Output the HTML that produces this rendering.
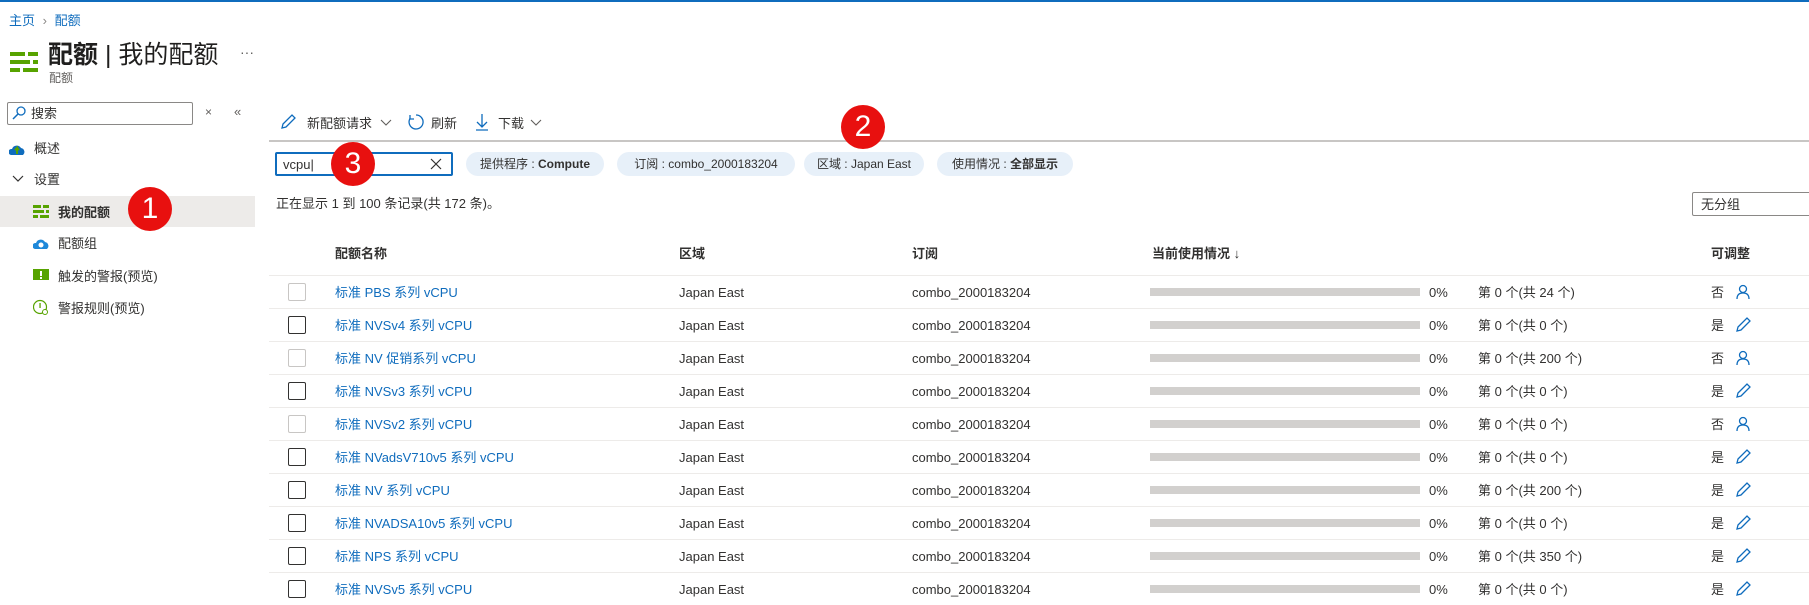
<!DOCTYPE html>
<html><head><meta charset="utf-8"><style>
*{margin:0;padding:0;box-sizing:border-box}
body{width:1809px;height:585px;overflow:hidden;background:#fff;font-family:"Liberation Sans","Noto Sans CJK SC",sans-serif;color:#323130;font-size:13px;line-height:17px;position:relative}
.a{position:absolute;white-space:nowrap}
.lnk{color:#0f6cbd}
.badge{position:absolute;width:44px;height:44px;border-radius:50%;background:#e8100f;color:#fff;font-size:30px;text-align:center;line-height:44px}
.pill{position:absolute;top:152px;height:24px;border-radius:12px;background:#e7f0f9;line-height:24px;text-align:center;font-size:12px;color:#323130;white-space:nowrap}
.row{position:absolute;left:269px;width:1540px;height:33px;border-top:1px solid #edebe9}
.cb{position:absolute;left:19px;top:7px;width:18px;height:18px;border:1px solid #323130;border-radius:2px}
.cb.d{border-color:#c8c6c4}
.bar{position:absolute;left:881px;top:12px;width:270px;height:8px;background:#d2d0ce}
</style></head><body>
<div class="a" style="left:0;top:0;width:1809px;height:2px;background:#0f6cbd"></div>
<div class="a lnk" style="left:9px;top:12px;font-size:13px">主页 <span style="color:#8a8886;margin:0 4px">›</span> 配额</div>
<svg class="a" style="left:10px;top:52px" width="28" height="22"><g fill="#57a300"><rect x="0" y="0" width="15" height="4"/><rect x="18" y="0" width="10" height="4"/><rect x="0" y="8" width="20" height="4"/><rect x="23" y="8" width="5" height="4"/><rect x="0" y="16" width="10" height="4"/><rect x="13" y="16" width="15" height="4"/></g></svg>
<div class="a" style="left:48px;top:40px;font-size:25px;line-height:30px;color:#201f1e"><b>配额</b> | 我的配额</div>
<div class="a" style="left:240px;top:44px;font-size:14px;color:#605e5c">···</div>
<div class="a" style="left:49px;top:71px;font-size:12px;line-height:14px;color:#605e5c">配额</div>
<div class="a" style="left:7px;top:102px;width:186px;height:23px;border:1px solid #8a8886;border-radius:2px"></div>
<svg class="a" style="left:12px;top:106px" width="14" height="14"><circle cx="9" cy="5" r="4" fill="none" stroke="#0f6cbd" stroke-width="1.3"/><path d="M6 8l-5 5" stroke="#0f6cbd" stroke-width="1.5"/></svg>
<div class="a" style="left:31px;top:105px;font-size:13px">搜索</div>
<div class="a" style="left:205px;top:104px;font-size:12px;color:#605e5c">×</div>
<div class="a" style="left:234px;top:103px;font-size:13px;color:#605e5c">«</div>
<svg class="a" style="left:9px;top:142px" width="16" height="14"><path d="M2 13h12a4 4 0 0 0-2-7 5 5 0 0 0-9 1 3 3 0 0 0-1 6z" fill="#0f6cbd"/><path d="M8 12V6l-2 2M8 6l2 2" stroke="#57a300" stroke-width="2" fill="none"/></svg>
<div class="a" style="left:34px;top:140px">概述</div>
<svg class="a" style="left:12px;top:175px" width="12" height="8"><path d="M1 1l5 5 5-5" fill="none" stroke="#323130" stroke-width="1.2"/></svg>
<div class="a" style="left:34px;top:171px">设置</div>
<div class="a" style="left:0;top:196px;width:255px;height:31px;background:#edebe9"></div>
<svg class="a" style="left:33px;top:205px" width="16" height="13"><g fill="#57a300"><rect x="0" y="0" width="8" height="3"/><rect x="10" y="0" width="6" height="3"/><rect x="0" y="5" width="11" height="3"/><rect x="13" y="5" width="3" height="3"/><rect x="0" y="10" width="5" height="3"/><rect x="7" y="10" width="9" height="3"/></g></svg>
<div class="a" style="left:58px;top:204px;font-weight:bold">我的配额</div>
<svg class="a" style="left:33px;top:236px" width="17" height="14"><path d="M2 13h12a4 4 0 0 0-2-7 5 5 0 0 0-9 1 3 3 0 0 0-1 6z" fill="#1e88d9"/><circle cx="8" cy="9" r="2.5" fill="#fff"/></svg>
<div class="a" style="left:58px;top:235px">配额组</div>
<svg class="a" style="left:33px;top:268px" width="16" height="14"><rect x="0" y="1" width="16" height="11" fill="#57a300"/><rect x="7" y="3" width="2" height="5" fill="#fff"/><rect x="7" y="9" width="2" height="2" fill="#fff"/></svg>
<div class="a" style="left:58px;top:268px">触发的警报(预览)</div>
<svg class="a" style="left:33px;top:299px" width="16" height="17"><circle cx="7" cy="8" r="6.5" fill="none" stroke="#57a300" stroke-width="1.2"/><rect x="6.4" y="4" width="1.3" height="5" fill="#57a300"/><circle cx="12" cy="13" r="2.5" fill="#fff" stroke="#57a300"/></svg>
<div class="a" style="left:58px;top:300px">警报规则(预览)</div>

<svg class="a" style="left:280px;top:114px" width="16" height="16"><path d="M2 14l1-4 9-9 3 3-9 9z" fill="none" stroke="#0f6cbd" stroke-width="1.3"/></svg>
<div class="a" style="left:307px;top:115px">新配额请求</div>
<svg class="a" style="left:380px;top:119px" width="12" height="8"><path d="M1 1l5 5 5-5" fill="none" stroke="#605e5c" stroke-width="1.1"/></svg>
<svg class="a" style="left:407px;top:113px" width="18" height="18"><path d="M9 2a7 7 0 1 1-6 3.5" fill="none" stroke="#0f6cbd" stroke-width="1.3"/><path d="M3 2v4h4" fill="none" stroke="#0f6cbd" stroke-width="1.3"/></svg>
<div class="a" style="left:431px;top:115px">刷新</div>
<svg class="a" style="left:475px;top:113px" width="14" height="18"><path d="M7 1v13M2 9l5 5 5-5M1 17h12" fill="none" stroke="#0f6cbd" stroke-width="1.3"/></svg>
<div class="a" style="left:498px;top:115px">下载</div>
<svg class="a" style="left:530px;top:119px" width="12" height="8"><path d="M1 1l5 5 5-5" fill="none" stroke="#605e5c" stroke-width="1.1"/></svg>
<div class="a" style="left:269px;top:140px;width:1540px;height:2px;background:#c8c6c4"></div>

<div class="a" style="left:275px;top:152px;width:178px;height:24px;border:2px solid #0f6cbd;border-radius:2px"></div>
<div class="a" style="left:283px;top:156px">vcpu|</div>
<svg class="a" style="left:430px;top:158px" width="12" height="12"><path d="M1 1l10 10M11 1L1 11" stroke="#323130" stroke-width="1.2"/></svg>
<div class="pill" style="left:466px;width:138px">提供程序 : <b>Compute</b></div>
<div class="pill" style="left:617px;width:178px">订阅 : combo_2000183204</div>
<div class="pill" style="left:804px;width:120px">区域 : Japan East</div>
<div class="pill" style="left:937px;width:136px">使用情况 : <b>全部显示</b></div>

<div class="a" style="left:276px;top:195px">正在显示 1 到 100 条记录(共 172 条)。</div>
<div class="a" style="left:1692px;top:192px;width:130px;height:24px;border:1px solid #8a8886;border-radius:2px;padding:3px 8px">无分组</div>

<div class="a" style="left:335px;top:245px;font-weight:bold">配额名称</div>
<div class="a" style="left:679px;top:245px;font-weight:bold">区域</div>
<div class="a" style="left:912px;top:245px;font-weight:bold">订阅</div>
<div class="a" style="left:1152px;top:245px;font-weight:bold">当前使用情况 <span style="font-weight:normal">↓</span></div>
<div class="a" style="left:1711px;top:245px;font-weight:bold">可调整</div>

<div id="rows"></div>
<script>
var d=[["标准 PBS 系列 vCPU","24",0],["标准 NVSv4 系列 vCPU","0",1],["标准 NV 促销系列 vCPU","200",0],["标准 NVSv3 系列 vCPU","0",1],["标准 NVSv2 系列 vCPU","0",0],["标准 NVadsV710v5 系列 vCPU","0",1],["标准 NV 系列 vCPU","200",1],["标准 NVADSA10v5 系列 vCPU","0",1],["标准 NPS 系列 vCPU","350",1],["标准 NVSv5 系列 vCPU","0",1]];
var h="";
d.forEach(function(r,i){
var y=275+i*33;
var icon=r[2]?'<svg style="position:absolute;left:1466px;top:8px" width="16" height="16"><path d="M2 14l1-4 9-9 3 3-9 9z" fill="none" stroke="#0f6cbd" stroke-width="1.3"/></svg>':'<svg style="position:absolute;left:1466px;top:8px" width="16" height="16"><circle cx="8" cy="5" r="3.5" fill="none" stroke="#0f6cbd" stroke-width="1.3"/><path d="M2 15c0-5 3-6 6-6s6 1 6 6" fill="none" stroke="#0f6cbd" stroke-width="1.3"/></svg>';
h+='<div class="row" style="top:'+y+'px"><div class="cb'+(r[2]?'':' d')+'"></div>'+
'<div class="a lnk" style="left:66px;top:8px">'+r[0]+'</div>'+
'<div class="a" style="left:410px;top:8px">Japan East</div>'+
'<div class="a" style="left:643px;top:8px">combo_2000183204</div>'+
'<div class="bar"></div><div class="a" style="left:1160px;top:8px">0%</div>'+
'<div class="a" style="left:1209px;top:8px">第 0 个(共 '+r[1]+' 个)</div>'+
'<div class="a" style="left:1442px;top:8px">'+(r[2]?'是':'否')+'</div>'+icon+'</div>';
});
document.getElementById("rows").innerHTML=h;
</script>

<div class="badge" style="left:128px;top:187px">1</div>
<div class="badge" style="left:841px;top:105px">2</div>
<div class="badge" style="left:331px;top:142px">3</div>
</body></html>
